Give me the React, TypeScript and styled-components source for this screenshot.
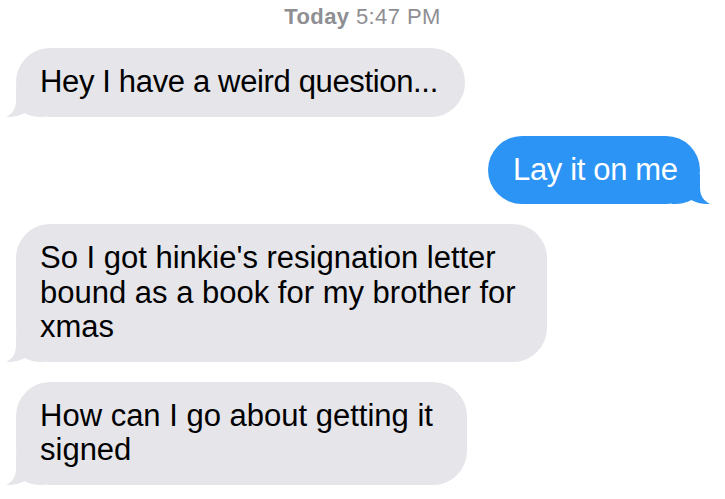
import React from "react";
import styled, { createGlobalStyle } from "styled-components";

const Global = createGlobalStyle`
  html, body { margin: 0; padding: 0; background: #ffffff; }
  body { font-family: "Liberation Sans", Arial, sans-serif; -webkit-font-smoothing: antialiased; }
`;

const Thread = styled.div`
  width: 725px;
  height: 499px;
  overflow: hidden;
  display: flex;
  flex-direction: column;
  padding-top: 4px;
  box-sizing: border-box;
`;

const Stamp = styled.div`
  text-align: center;
  font-size: 22px;
  line-height: 26px;
  letter-spacing: 0.4px;
  color: #8e8e93;
  margin-bottom: 18px;
  b { font-weight: 700; }
`;

const Row = styled.div<{ $out?: boolean; $gap?: number }>`
  display: flex;
  justify-content: ${(p) => (p.$out ? "flex-end" : "flex-start")};
  padding: ${(p) => (p.$out ? "0 25px 0 0" : "0 0 0 16px")};
  margin-bottom: ${(p) => p.$gap ?? 20}px;
`;

const Bubble = styled.div<{ $out?: boolean; $w: number; $track: number }>`
  position: relative;
  box-sizing: border-box;
  width: ${(p) => p.$w}px;
  padding: 17px 0 17px ${(p) => (p.$out ? 25 : 24)}px;
  border-radius: 34px;
  background: ${(p) => (p.$out ? "#2b94f5" : "#e5e5ea")};
  color: ${(p) => (p.$out ? "#ffffff" : "#000000")};
  font-size: 31px;
  line-height: 34.5px;
  letter-spacing: ${(p) => p.$track}px;
  white-space: nowrap;
`;

const Text = styled.span`
  position: relative;
`;

const Tail = styled.svg<{ $out?: boolean }>`
  position: absolute;
  bottom: 0;
  width: 40px;
  height: 30px;
  overflow: visible;
  ${(p) => (p.$out ? "right: -12px; transform: scaleX(-1);" : "left: -12px;")}
`;

const BubbleTail = ({ out, color }: { out?: boolean; color: string }) => (
  <Tail $out={out} viewBox="0 0 40 30">
    <path
      d="M12 0 L12 14 C12 22 8 27 2 30 C9 30.5 16 28.5 21 26 C25 28.5 30 30 40 30 L40 0 Z"
      fill={color}
    />
  </Tail>
);

const Message = ({
  out,
  w,
  gap,
  track = 0,
  children,
}: {
  out?: boolean;
  w: number;
  gap?: number;
  track?: number;
  children: React.ReactNode;
}) => (
  <Row $out={out} $gap={gap}>
    <Bubble $out={out} $w={w} $track={track}>
      <BubbleTail out={out} color={out ? "#2b94f5" : "#e5e5ea"} />
      <Text>{children}</Text>
    </Bubble>
  </Row>
);

export default function App() {
  return (
    <>
      <Global />
      <Thread>
        <Stamp>
          <b>Today</b> 5:47 PM
        </Stamp>
        <Message w={449} gap={19} track={-0.35}>
          Hey I have a weird question...
        </Message>
        <Message out w={212} track={-0.35}>
          Lay it on me
        </Message>
        <Message w={531}>
          So I got hinkie's resignation letter
          <br />
          bound as a book for my brother for
          <br />
          xmas
        </Message>
        <Message w={451}>
          How can I go about getting it
          <br />
          signed
        </Message>
      </Thread>
    </>
  );
}
